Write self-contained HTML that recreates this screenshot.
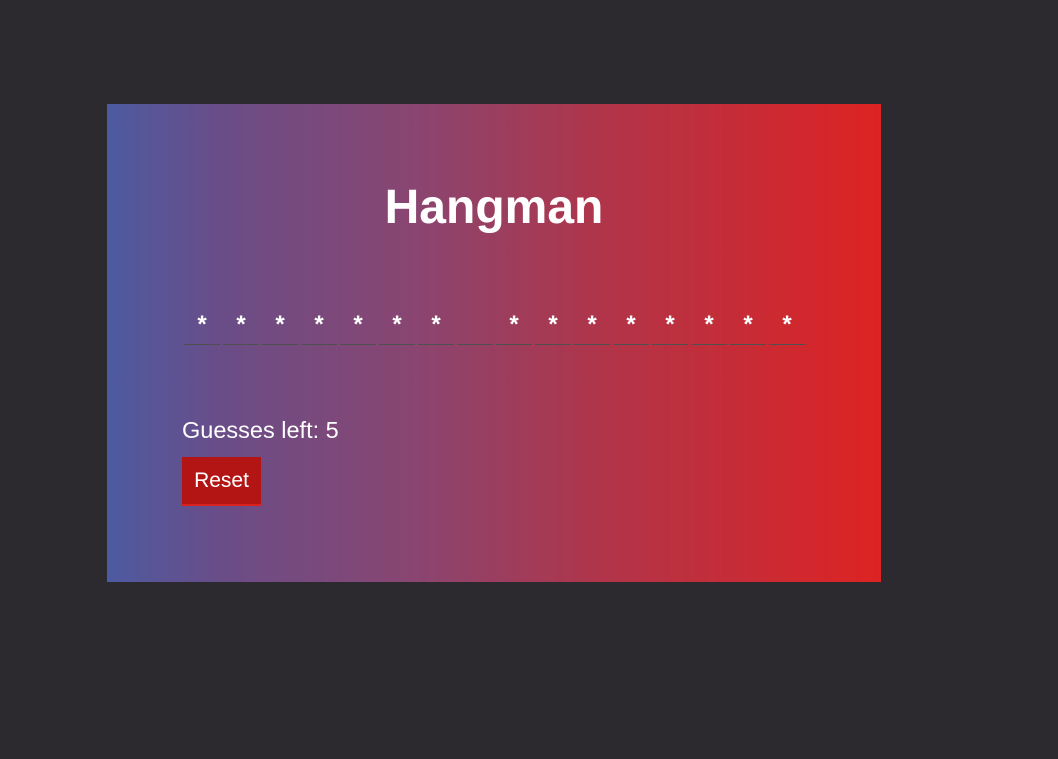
<!DOCTYPE html>
<html><head><style>
body{margin:0;background:#2c2a2e;width:1058px;height:759px;overflow:hidden;font-family:"Liberation Sans",Arial,sans-serif;}
.box{position:absolute;left:107px;top:104px;width:774px;height:478px;background:linear-gradient(90deg,#4d5aa1 0%,#6a4d87 15%,#8a4570 40%,#b23448 65%,#dd2323 100%);}
h1{position:absolute;left:0;width:774px;top:76px;margin:0;text-align:center;color:#fff;font-size:48px;font-weight:bold;line-height:56px;}
.slot{position:absolute;top:206px;width:36px;height:34px;border-bottom:1px solid #505050;color:#fff;font-size:24px;font-weight:bold;text-align:center;line-height:30px;}
.g{position:absolute;left:75px;top:313px;color:#fff;font-size:23.5px;}
.btn{position:absolute;left:75px;top:353px;width:79px;height:47px;background:#b31414;border-bottom:2px solid #d82222;color:#fff;font-size:21px;text-align:center;line-height:48px;}
</style></head><body>
<div class="box">
<h1>Hangman</h1>
<div class="slot" style="left:77px">*</div>
<div class="slot" style="left:116px">*</div>
<div class="slot" style="left:155px">*</div>
<div class="slot" style="left:194px">*</div>
<div class="slot" style="left:233px">*</div>
<div class="slot" style="left:272px">*</div>
<div class="slot" style="left:311px">*</div>
<div class="slot" style="left:350px"></div>
<div class="slot" style="left:389px">*</div>
<div class="slot" style="left:428px">*</div>
<div class="slot" style="left:467px">*</div>
<div class="slot" style="left:506px">*</div>
<div class="slot" style="left:545px">*</div>
<div class="slot" style="left:584px">*</div>
<div class="slot" style="left:623px">*</div>
<div class="slot" style="left:662px">*</div>
<div class="g">Guesses left: 5</div>
<div class="btn">Reset</div>
</div>
</body></html>
